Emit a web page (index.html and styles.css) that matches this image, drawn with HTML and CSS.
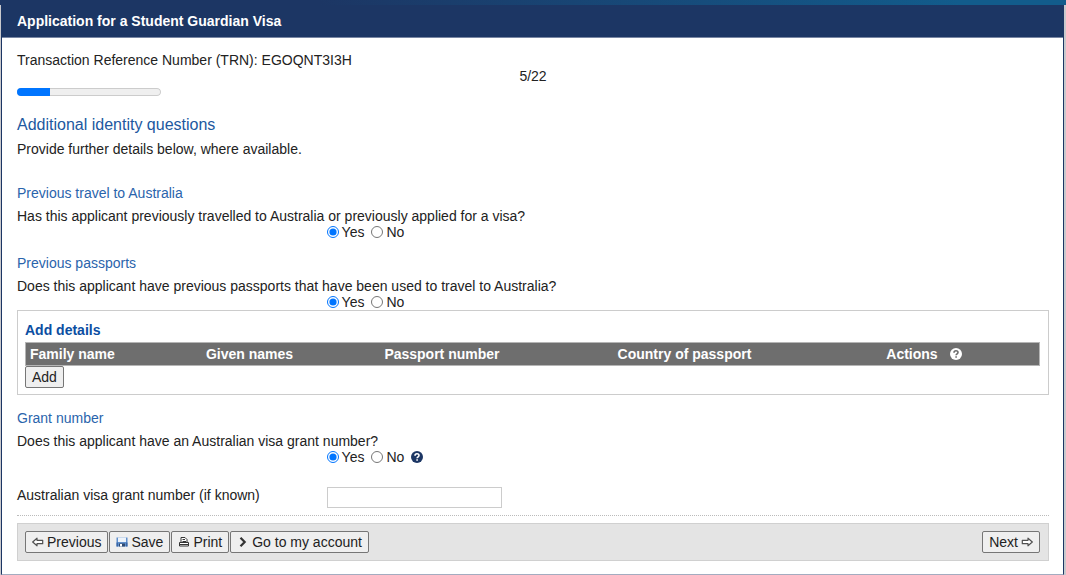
FILE: index.html
```html
<!DOCTYPE html>
<html lang="en">
<head>
<meta charset="utf-8">
<title>Application for a Student Guardian Visa</title>
<link rel="stylesheet" href="styles.css">
</head>
<body>
<div class="banner"></div>
<main class="sheet">
  <h1 class="sheet-title">Application for a Student Guardian Visa</h1>
  <form class="content">
    <div class="trn">Transaction Reference Number (TRN): EGOQNT3I3H</div>
    <div class="step" id="step">5/22</div>
    <progress class="progress" value="5" max="22" aria-labelledby="step"></progress>

    <h2 class="page-heading">Additional identity questions</h2>
    <p class="intro">Provide further details below, where available.</p>

    <section class="group">
      <h3 class="heading">Previous travel to Australia</h3>
      <div class="question" id="q-travel">Has this applicant previously travelled to Australia or previously applied for a visa?</div>
      <div class="choices" role="radiogroup" aria-labelledby="q-travel">
        <label class="choice"><input class="radio" type="radio" name="travel" checked>Yes</label>
        <label class="choice"><input class="radio" type="radio" name="travel">No</label>
      </div>
    </section>

    <section class="group">
      <h3 class="heading">Previous passports</h3>
      <div class="question" id="q-passports">Does this applicant have previous passports that have been used to travel to Australia?</div>
      <div class="choices" role="radiogroup" aria-labelledby="q-passports">
        <label class="choice"><input class="radio" type="radio" name="passports" checked>Yes</label>
        <label class="choice"><input class="radio" type="radio" name="passports">No</label>
      </div>
      <div class="details">
        <h4 class="details-title">Add details</h4>
        <table class="passports">
          <thead>
            <tr>
              <th class="col-family">Family name</th>
              <th class="col-given">Given names</th>
              <th class="col-number">Passport number</th>
              <th class="col-country">Country of passport</th>
              <th><span class="actions">Actions
                <svg class="help" viewBox="0 0 12 12" role="img" aria-label="Help"><circle cx="6" cy="6" r="6" fill="#fff"/><path d="M4 4.7C4 2.2 8 2.2 8 4.5 8 5.8 6.1 5.8 6.1 7.3M6.1 8.2V9.8" fill="none" stroke="#6e6e6e" stroke-width="1.6"/></svg></span></th>
            </tr>
          </thead>
        </table>
        <button class="button" type="button">Add</button>
      </div>
    </section>

    <section class="group">
      <h3 class="heading">Grant number</h3>
      <div class="question" id="q-grant">Does this applicant have an Australian visa grant number?</div>
      <div class="choices" role="radiogroup" aria-labelledby="q-grant">
        <label class="choice"><input class="radio" type="radio" name="grant" checked>Yes</label>
        <label class="choice"><input class="radio" type="radio" name="grant">No</label>
        <svg class="help" viewBox="0 0 12 12" role="img" aria-label="Help"><circle cx="6" cy="6" r="6" fill="#1c3664"/><path d="M4 4.7C4 2.2 8 2.2 8 4.5 8 5.8 6.1 5.8 6.1 7.3M6.1 8.2V9.8" fill="none" stroke="#fff" stroke-width="1.6"/></svg>
      </div>
      <div class="field">
        <label class="field-label" for="grant-number">Australian visa grant number (if known)</label>
        <input class="field-input" id="grant-number" type="text">
      </div>
    </section>

    <div class="toolbar">
      <div class="toolbar-group">
        <button class="button" type="button"><svg class="icon" viewBox="0 0 12 12"><path d="M.7 6 5 2.2V4.3H10.7V7.7H5V9.8Z" fill="#fff" stroke="#505050" stroke-width="1.2" stroke-linejoin="round"/></svg>Previous</button>
        <button class="button" type="button"><svg class="icon" viewBox="0 0 12 12"><path d="M.5 1.5H11.5V10.500H.5Z" fill="#5f8fcc"/><path d="M2 1.500H10V6H2Z" fill="#edf3fa"/><path d="M.5 6.500H2V10.500H.5ZM10 6.500H11.500V10.500H10Z" fill="#3a66a5"/><path d="M3 7.500H9V10.500H3Z" fill="#30496f"/><path d="M4 8H6V10.500H4Z" fill="#fff"/></svg>Save</button>
        <button class="button" type="button"><svg class="icon" viewBox="0 0 12 12"><path d="M3 6.500V1.500H7L9 3.500V6.500M1.500 6.500H10.500V10H1.500Z" fill="#fff" stroke="#333"/><path d="M4.500 3.500H7M4.500 5.500H8M2 8.500H10" stroke="#333"/></svg>Print</button>
        <button class="button" type="button"><svg class="icon" viewBox="0 0 12 12"><path d="M3.500 1.700 7.700 6 3.500 10.300" fill="none" stroke="#333" stroke-width="2.200"/></svg>Go to my account</button>
      </div>
      <button class="button" type="button">Next<svg class="icon" viewBox="0 0 12 12"><path d="M11.300 6 7 2.200V4.300H1.300V7.700H7V9.800Z" fill="#fff" stroke="#505050" stroke-width="1.200" stroke-linejoin="round"/></svg></button>
    </div>
  </form>
</main>
</body>
</html>
```

FILE: styles.css
```css
* { box-sizing: border-box; }

body {
  margin: 0;
  background: #c9c9cd;
  color: #222;
  font: 14px/16px "Liberation Sans", Arial, sans-serif;
}

h1, h2, h3, h4, p { margin: 0; }

.banner {
  height: 5px;
  background: linear-gradient(90deg, #1c3664 30%, #125c8c 90%);
}

.sheet {
  margin: 0 2px 0 1px;
  border: 1px solid #1c3664;
  border-top: 0;
  border-bottom-color: #a3acc0;
  background: #fff;
}

.sheet-title {
  padding: 8px 15px;
  border-bottom: 1px solid #7886a3;
  background: #1c3664;
  color: #fff;
  font-size: 14px;
  line-height: 16px;
}

.content { padding: 14px 14px 13px 15px; }

.step { text-align: center; }

.progress {
  display: block;
  width: 144px;
  height: 8px;
  margin: 4px 0 20px;
  overflow: hidden;
  appearance: none;
  border: 0;
  border-radius: 4px;
}
.progress::-webkit-progress-bar {
  border-radius: 4px;
  background: #efefef;
  box-shadow: inset 0 0 0 1px #ccc;
}
.progress::-webkit-progress-value { background: #0075ff; }

.page-heading {
  color: #2158a0;
  font-size: 16px;
  font-weight: 400;
  line-height: 18px;
}

.intro { margin: 7px 0 28px; }

.group { margin-bottom: 15px; }

.heading {
  margin-bottom: 7px;
  color: #2a64ac;
  font-size: 14px;
  font-weight: 400;
}

.choices {
  display: flex;
  align-items: center;
  gap: 7px;
  padding-left: 30%;
}

.choice { display: flex; align-items: center; gap: 3px; }

.radio { width: 12px; height: 12px; margin: 0; }

.help { width: 12px; height: 12px; flex: none; }

.details {
  padding: 11px 8px 6px 7px;
  border: 1px solid #ccc;
}

.details-title {
  margin-bottom: 4px;
  color: #0b4ea2;
  font-size: 14px;
}

.passports {
  width: 100%;
  border: 1px solid #b5b5b5;
  border-collapse: collapse;
  background: #6e6e6e;
  color: #fff;
  table-layout: fixed;
}
.passports th { padding: 3px 4px; text-align: left; }
.col-family { width: 17.4%; }
.col-given { width: 17.6%; }
.col-number { width: 23%; }
.col-country { width: 26.5%; }

.actions { display: flex; align-items: center; gap: 12px; }

.button {
  display: inline-flex;
  align-items: center;
  gap: 3px;
  height: 22px;
  padding: 0 6px;
  border: 1px solid #767676;
  border-radius: 2px;
  background: #efefef;
  color: #222;
  font: inherit;
  vertical-align: top;
}

.icon { width: 12px; height: 12px; }

.field {
  display: flex;
  padding: 22px 0 7px;
  margin-bottom: -8px;
  border-bottom: 1px dotted #bbb;
}
.field-label { flex: 0 0 30%; }
.field-input {
  width: 17%;
  height: 21px;
  border: 1px solid #ccc;
  background: #fff;
  font: inherit;
}

.toolbar {
  display: flex;
  justify-content: space-between;
  padding: 7px 8px 7px 7px;
  border: 1px solid #d0d0d0;
  background: #e4e4e4;
}
.toolbar-group { display: flex; gap: 1px; }
```
